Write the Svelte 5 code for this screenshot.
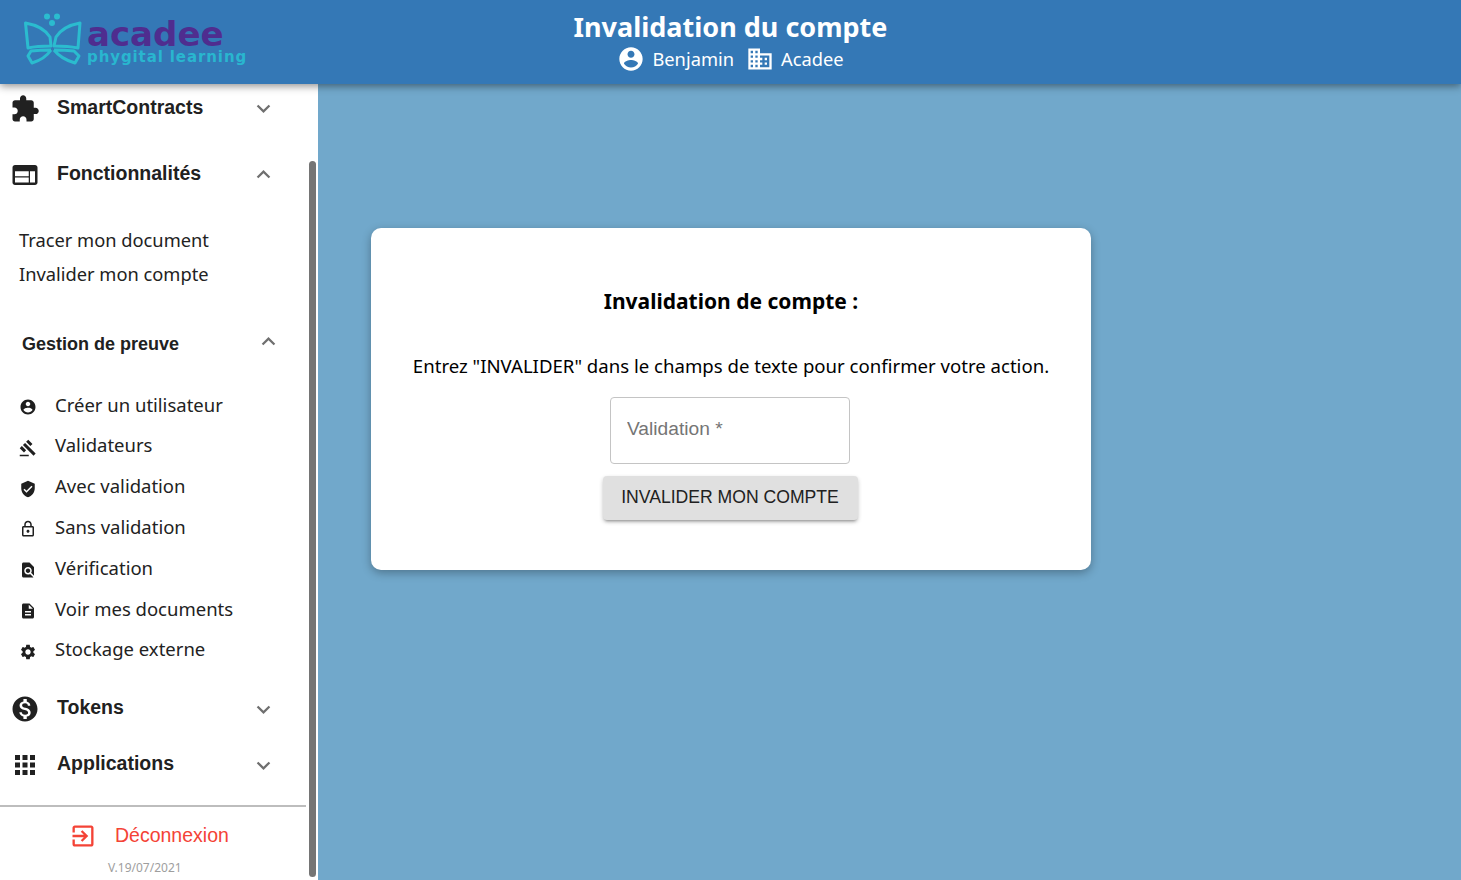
<script>
	const icons = {
		extension:
			'M20.5 11H19V7c0-1.1-.9-2-2-2h-4V3.5C13 2.12 11.88 1 10.5 1S8 2.12 8 3.5V5H4c-1.1 0-1.99.9-1.99 2v3.8H3.5c1.49 0 2.7 1.21 2.7 2.7s-1.21 2.7-2.7 2.7H2V20c0 1.1.9 2 2 2h3.8v-1.5c0-1.49 1.21-2.7 2.7-2.7 1.49 0 2.7 1.21 2.7 2.7V22H17c1.1 0 2-.9 2-2v-4h1.5c1.38 0 2.5-1.12 2.5-2.5S21.88 11 20.5 11z',
		web: 'M20 4H4c-1.1 0-1.99.9-1.99 2L2 18c0 1.1.9 2 2 2h16c1.1 0 2-.9 2-2V6c0-1.1-.9-2-2-2zm-5 14H4v-4h11v4zm0-5H4V9h11v4zm5 5h-4V9h4v9z',
		account:
			'M12 2C6.48 2 2 6.48 2 12s4.48 10 10 10 10-4.48 10-10S17.52 2 12 2zm0 3c1.66 0 3 1.34 3 3s-1.34 3-3 3-3-1.34-3-3 1.34-3 3-3zm0 14.2c-2.5 0-4.71-1.28-6-3.22.03-1.99 4-3.08 6-3.08 1.99 0 5.97 1.09 6 3.08-1.29 1.94-3.5 3.22-6 3.22z',
		gavel:
			'M1 21h12v2H1zM5.245 8.07l2.83-2.827 14.14 14.142-2.828 2.828zM12.317 1l5.657 5.656-2.83 2.83-5.654-5.66zM3.825 9.485l5.657 5.657-2.828 2.828-5.657-5.657z',
		verified:
			'M12 1L3 5v6c0 5.55 3.84 10.74 9 12 5.16-1.26 9-6.45 9-12V5l-9-4zm-2 16l-4-4 1.41-1.41L10 14.17l6.59-6.59L18 9l-8 8z',
		lock: 'M18 8h-1V6c0-2.76-2.24-5-5-5S7 3.24 7 6v2H6c-1.1 0-2 .9-2 2v10c0 1.1.9 2 2 2h12c1.1 0 2-.9 2-2V10c0-1.1-.9-2-2-2zM9 6c0-1.66 1.34-3 3-3s3 1.34 3 3v2H9V6zm9 14H6V10h12v10zm-6-3c1.1 0 2-.9 2-2s-.9-2-2-2-2 .9-2 2 .9 2 2 2z',
		find: 'M20 19.59V8l-6-6H6c-1.1 0-1.99.9-1.99 2L4 20c0 1.1.89 2 1.99 2H18c.45 0 .85-.15 1.19-.4l-4.43-4.43c-.8.52-1.74.83-2.76.83-2.76 0-5-2.24-5-5s2.24-5 5-5 5 2.24 5 5c0 1.02-.31 1.96-.83 2.75L20 19.59zM9 13c0 1.66 1.34 3 3 3s3-1.34 3-3-1.34-3-3-3-3 1.34-3 3z',
		description:
			'M14 2H6c-1.1 0-1.99.9-1.99 2L4 20c0 1.1.89 2 1.99 2H18c1.1 0 2-.9 2-2V8l-6-6zm2 16H8v-2h8v2zm0-4H8v-2h8v2zm-3-5V3.5L18.5 9H13z',
		settings:
			'M19.14 12.94c.04-.3.06-.61.06-.94 0-.32-.02-.64-.07-.94l2.03-1.58c.18-.14.23-.41.12-.61l-1.92-3.32c-.12-.22-.37-.29-.59-.22l-2.39.96c-.5-.38-1.03-.7-1.62-.94l-.36-2.54c-.04-.24-.24-.41-.48-.41h-3.84c-.24 0-.43.17-.47.41l-.36 2.54c-.59.24-1.13.57-1.62.94l-2.39-.96c-.22-.08-.47 0-.59.22L2.74 8.87c-.12.21-.08.47.12.61l2.03 1.58c-.05.3-.09.63-.09.94s.02.64.07.94l-2.03 1.58c-.18.14-.23.41-.12.61l1.92 3.32c.12.22.37.29.59.22l2.39-.96c.5.38 1.03.7 1.62.94l.36 2.54c.05.24.24.41.48.41h3.84c.24 0 .44-.17.47-.41l.36-2.54c.59-.24 1.13-.56 1.62-.94l2.39.96c.22.08.47 0 .59-.22l1.92-3.32c.12-.22.07-.47-.12-.61l-2.01-1.58zM12 15.6c-1.98 0-3.6-1.62-3.6-3.6s1.62-3.6 3.6-3.6 3.6 1.62 3.6 3.6-1.62 3.6-3.6 3.6z',
		money:
			'M12 2C6.48 2 2 6.48 2 12s4.48 10 10 10 10-4.48 10-10S17.52 2 12 2zm1.41 16.09V20h-2.67v-1.93c-1.71-.36-3.16-1.46-3.27-3.4h1.96c.1 1.05.82 1.87 2.65 1.87 1.96 0 2.4-.98 2.4-1.59 0-.83-.44-1.61-2.67-2.14-2.48-.6-4.18-1.62-4.18-3.67 0-1.72 1.39-2.84 3.11-3.21V4h2.67v1.95c1.86.45 2.79 1.86 2.85 3.39H14.3c-.05-1.11-.64-1.87-2.22-1.87-1.5 0-2.4.68-2.4 1.64 0 .84.65 1.39 2.67 1.91s4.18 1.39 4.18 3.91c-.01 1.83-1.38 2.83-3.12 3.16z',
		apps: 'M4 8h4V4H4v4zm6 12h4v-4h-4v4zm-6 0h4v-4H4v4zm0-6h4v-4H4v4zm6 0h4v-4h-4v4zm6-10v4h4V4h-4zm-6 4h4V4h-4v4zm6 6h4v-4h-4v4zm0 6h4v-4h-4v4z',
		domain:
			'M12 7V3H2v18h20V7H12zM6 19H4v-2h2v2zm0-4H4v-2h2v2zm0-4H4V9h2v2zm0-4H4V5h2v2zm4 12H8v-2h2v2zm0-4H8v-2h2v2zm0-4H8V9h2v2zm0-4H8V5h2v2zm10 12h-8v-2h2v-2h-2v-2h2v-2h-2V9h8v10zm-2-8h-2v2h2v-2zm0 4h-2v2h2v-2z',
		exit: 'M10.09 15.59L11.5 17l5-5-5-5-1.41 1.41L12.67 11H3v2h9.67l-2.58 2.59zM19 3H5c-1.11 0-2 .9-2 2v4h2V5h14v14H5v-4H3v4c0 1.1.89 2 2 2h14c1.1 0 2-.9 2-2V5c0-1.1-.9-2-2-2z',
		more: 'M16.59 8.59L12 13.17 7.41 8.59 6 10l6 6 6-6z',
		less: 'M12 8l-6 6 1.41 1.41L12 10.83l4.59 4.58L18 14z'
	};

	const proofItems = [
		{ label: 'Créer un utilisateur', icon: icons.account },
		{ label: 'Validateurs', icon: icons.gavel },
		{ label: 'Avec validation', icon: icons.verified },
		{ label: 'Sans validation', icon: icons.lock },
		{ label: 'Vérification', icon: icons.find },
		{ label: 'Voir mes documents', icon: icons.description },
		{ label: 'Stockage externe', icon: icons.settings }
	];
</script>

<div class="page">
	<header>
		<div class="logo">
			<svg class="butterfly" viewBox="0 0 60 54" width="60" height="54">
				<g fill="#2bbccf">
					<circle cx="24" cy="3.5" r="3" />
					<circle cx="34" cy="3.5" r="3" />
					<circle cx="29" cy="10" r="3" />
				</g>
				<g fill="none" stroke="#2bbccf" stroke-width="3" stroke-linejoin="round">
					<path d="M2.5 10 Q20 13 27 24 L28 33 Q14 33 5 35 Z" />
					<path d="M57 10 Q40 13 33 24 L31 33 Q45 33 55 35 Z" />
					<path d="M28 37 Q17 37 8 38 L5 43 L9 50 Q22 46 28 37" />
					<path d="M31 37 Q42 37 51 38 L56 43 L52 50 Q38 46 31 37" />
				</g>
			</svg>
			<div class="wordmark">
				<span class="logo-name">acadee</span>
				<span class="logo-tag">phygital learning</span>
			</div>
		</div>
		<div class="title-block">
			<h1>Invalidation du compte</h1>
			<div class="who">
				<svg viewBox="0 0 24 24" width="28" height="28"><path d={icons.account} /></svg>
				<span class="who-name">Benjamin</span>
				<svg viewBox="0 0 24 24" width="28" height="28"><path d={icons.domain} /></svg>
				<span>Acadee</span>
			</div>
		</div>
		<div></div>
	</header>

	<div class="body">
		<aside>
			<nav>
				<div class="section first">
					<svg class="section-icon" viewBox="0 0 24 24"><path d={icons.extension} /></svg>
					<span class="section-label">SmartContracts</span>
					<svg class="chevron" viewBox="0 0 24 24"><path d={icons.more} /></svg>
				</div>
				<div class="section">
					<svg class="section-icon" viewBox="0 0 24 24"><path d={icons.web} /></svg>
					<span class="section-label">Fonctionnalités</span>
					<svg class="chevron" viewBox="0 0 24 24"><path d={icons.less} /></svg>
				</div>
				<div class="plain-list">
					<a href="#tracer">Tracer mon document</a>
					<a href="#invalider">Invalider mon compte</a>
				</div>
				<div class="subsection">
					<span>Gestion de preuve</span>
					<svg class="chevron" viewBox="0 0 24 24"><path d={icons.less} /></svg>
				</div>
				<ul>
					{#each proofItems as item}
						<li>
							<svg viewBox="0 0 24 24" width="18" height="18"><path d={item.icon} /></svg>
							<span>{item.label}</span>
						</li>
					{/each}
				</ul>
				<div class="section tokens">
					<svg class="section-icon" viewBox="0 0 24 24"><path d={icons.money} /></svg>
					<span class="section-label">Tokens</span>
					<svg class="chevron" viewBox="0 0 24 24"><path d={icons.more} /></svg>
				</div>
				<div class="section apps">
					<svg class="section-icon" viewBox="0 0 24 24"><path d={icons.apps} /></svg>
					<span class="section-label">Applications</span>
					<svg class="chevron" viewBox="0 0 24 24"><path d={icons.more} /></svg>
				</div>
				<hr />
				<button class="logout">
					<svg viewBox="0 0 24 24" width="28" height="28"><path d={icons.exit} /></svg>
					<span>Déconnexion</span>
				</button>
				<div class="version">V.19/07/2021</div>
			</nav>
			<div class="scroll-thumb"></div>
		</aside>

		<main>
			<section class="card">
				<h2>Invalidation de compte :</h2>
				<p>Entrez "INVALIDER" dans le champs de texte pour confirmer votre action.</p>
				<label class="field">
					<input type="text" placeholder="Validation *" />
				</label>
				<button class="submit">INVALIDER MON COMPTE</button>
			</section>
		</main>
	</div>
</div>

<style>
	:global(body) {
		margin: 0;
		font-family: 'Noto Sans', sans-serif;
	}
	.page {
		display: flex;
		flex-direction: column;
		height: 880px;
		overflow: hidden;
	}
	header {
		position: relative;
		z-index: 2;
		flex: 0 0 84px;
		display: grid;
		grid-template-columns: 1fr auto 1fr;
		background: #3478b6;
		box-shadow: 0 2px 8px rgba(0, 0, 0, 0.45);
		color: #fff;
	}
	.logo {
		display: flex;
		align-items: flex-start;
		padding: 13px 0 0 23px;
	}
	.wordmark {
		display: flex;
		flex-direction: column;
		margin: 6px 0 0 4px;
		font-family: 'DejaVu Sans', sans-serif;
		font-weight: 700;
	}
	.logo-name {
		color: #4f2d8f;
		font-size: 34px;
		line-height: 30px;
	}
	.logo-tag {
		color: #29b6cf;
		font-size: 15px;
		line-height: 16px;
		letter-spacing: 0.9px;
	}
	.title-block {
		display: flex;
		flex-direction: column;
		align-items: center;
		padding-top: 9px;
	}
	h1 {
		margin: 0;
		font-size: 27px;
		line-height: 36px;
		font-weight: 700;
	}
	.who {
		display: flex;
		align-items: center;
		gap: 7px;
		font-size: 18.3px;
		line-height: 28px;
	}
	.who svg {
		fill: #fff;
	}
	.who-name {
		margin-right: 5px;
	}
	.body {
		flex: 1;
		display: flex;
		min-height: 0;
	}
	aside {
		position: relative;
		flex: 0 0 318px;
		background: #fff;
	}
	nav {
		display: flex;
		flex-direction: column;
	}
	.section {
		display: flex;
		align-items: center;
		height: 46px;
		padding-left: 10px;
		margin-top: 20px;
	}
	.section.first {
		margin-top: 0;
	}
	.section.tokens {
		margin-top: 15px;
	}
	.section.apps {
		margin-top: 10px;
	}
	.section-icon {
		flex: none;
		width: 30px;
		height: 30px;
		margin-top: 3px;
		fill: #212121;
	}
	.section-label {
		flex: 0 0 193px;
		margin-left: 17px;
		font-family: 'Liberation Sans', sans-serif;
		font-size: 19.5px;
		font-weight: 700;
		color: #212121;
	}
	.chevron {
		flex: none;
		width: 27px;
		height: 27px;
		fill: #6f6f6f;
		margin-top: 3px;
	}
	.plain-list {
		display: flex;
		flex-direction: column;
		margin-top: 27px;
		padding-left: 19px;
	}
	.plain-list a {
		line-height: 34px;
		font-size: 18.3px;
		color: #222;
		text-decoration: none;
	}
	.subsection {
		display: flex;
		align-items: center;
		justify-content: space-between;
		height: 46px;
		margin-top: 29px;
		padding: 0 36px 0 22px;
		font-family: 'Liberation Sans', sans-serif;
		font-size: 18px;
		font-weight: 700;
		color: #212121;
	}
	.subsection span {
		margin-top: 2px;
	}
	.subsection .chevron {
		margin: -3px 0 0;
	}
	ul {
		list-style: none;
		margin: 18.2px 0 0;
		padding: 0;
	}
	li {
		display: flex;
		height: 40.8px;
		align-items: center;
		padding-left: 19px;
		gap: 18px;
		font-size: 18.5px;
		color: #222;
	}
	li svg {
		fill: #1f1f1f;
		margin-top: 5px;
	}
	li span {
		margin-top: -1px;
	}
	hr {
		width: 306px;
		margin: 18px 0 0;
		border: 0;
		border-top: 2px solid #bdbdbd;
	}
	.logout {
		display: flex;
		align-items: center;
		gap: 18px;
		margin: 15px 0 0 69px;
		padding: 0;
		border: 0;
		background: none;
		font-family: 'Liberation Sans', sans-serif;
		font-size: 19.5px;
		color: #f44336;
	}
	.logout svg {
		fill: #f44336;
	}
	.version {
		margin: 10px 0 0 108px;
		font-size: 12px;
		line-height: 16px;
		color: #9e9e9e;
	}
	.scroll-thumb {
		position: absolute;
		right: 2px;
		top: 77px;
		bottom: 3px;
		width: 7px;
		border-radius: 4px;
		background: #757575;
	}
	main {
		flex: 1;
		background: #71a8cb;
		padding: 144px 53px 0;
	}
	.card {
		display: flex;
		flex-direction: column;
		align-items: center;
		box-sizing: border-box;
		width: 720px;
		height: 342px;
		padding-top: 58px;
		background: #fff;
		border-radius: 10px;
		box-shadow: 0 3px 10px rgba(0, 0, 0, 0.3);
		color: #000;
	}
	h2 {
		margin: 0;
		font-size: 21px;
		line-height: 30px;
		font-weight: 700;
	}
	.card p {
		margin: 37px 0 0;
		font-size: 18.6px;
		line-height: 26px;
	}
	.field {
		display: block;
		margin: 18px 2px 0 0;
	}
	input {
		box-sizing: border-box;
		display: block;
		width: 240px;
		height: 67px;
		padding: 0 16px 4px;
		border: 1px solid #c4c4c4;
		border-radius: 4px;
		font-family: 'Liberation Sans', sans-serif;
		font-size: 19.2px;
		background: #fff;
	}
	input::placeholder {
		color: #757575;
		opacity: 1;
	}
	.submit {
		margin: 12px 2px 0 0;
		width: 255px;
		height: 44px;
		padding: 0 0 2px;
		border: 0;
		border-radius: 4px;
		background: #e0e0e0;
		font-family: 'Liberation Sans', sans-serif;
		font-size: 17.6px;
		color: #212121;
		box-shadow: 0 3px 3px -2px rgba(0, 0, 0, 0.3), 0 2px 4px rgba(0, 0, 0, 0.22);
	}
</style>
